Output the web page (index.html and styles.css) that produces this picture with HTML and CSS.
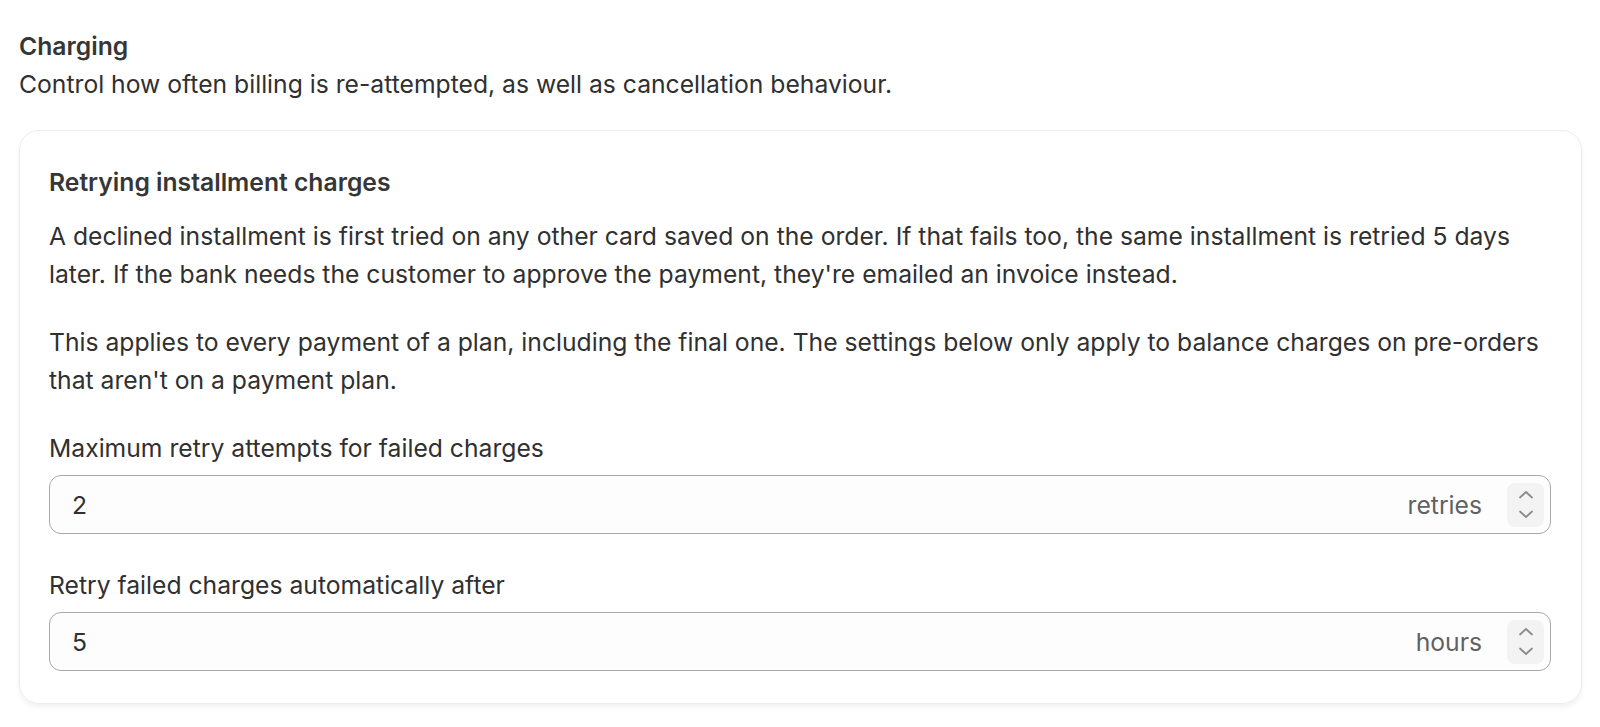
FILE: index.html
```html
<!DOCTYPE html>
<html lang="en">

<head>
    <meta charset="UTF-8">
    <meta name="viewport" content="width=device-width, initial-scale=1.0">
    <title>Charging</title>
    <link rel="stylesheet" href="styles.css">
</head>

<body>
    <div class="section">
        <div class="section-head">
            <h2>Charging</h2>
            <p>Control how often billing is re-attempted, as well as cancellation behaviour.</p>
        </div>
        <div class="card">
            <h3>Retrying installment charges</h3>
            <p class="text">A declined installment is first tried on any other card saved on the order. If that fails too, the same installment is retried 5 days later. If the bank needs the customer to approve the payment, they're emailed an invoice instead.</p>
            <p class="text">This applies to every payment of a plan, including the final one. The settings below only apply to balance charges on pre-orders that aren't on a payment plan.</p>

            <div class="field">
                <label>Maximum retry attempts for failed charges</label>
                <div class="input">
                    <span class="value">2</span>
                    <span class="unit">retries</span>
                    <span class="stepper">
                        <svg width="18" height="11" viewBox="0 0 18 11"><path d="M3 8.5 9 3l6 5.5" fill="none" stroke="#8a8a8a" stroke-width="1.7" stroke-linecap="round" stroke-linejoin="round"/></svg>
                        <svg width="18" height="11" viewBox="0 0 18 11"><path d="M3 2.5 9 8l6-5.5" fill="none" stroke="#8a8a8a" stroke-width="1.7" stroke-linecap="round" stroke-linejoin="round"/></svg>
                    </span>
                </div>
            </div>

            <div class="field">
                <label>Retry failed charges automatically after</label>
                <div class="input">
                    <span class="value">5</span>
                    <span class="unit">hours</span>
                    <span class="stepper">
                        <svg width="18" height="11" viewBox="0 0 18 11"><path d="M3 8.5 9 3l6 5.5" fill="none" stroke="#8a8a8a" stroke-width="1.7" stroke-linecap="round" stroke-linejoin="round"/></svg>
                        <svg width="18" height="11" viewBox="0 0 18 11"><path d="M3 2.5 9 8l6-5.5" fill="none" stroke="#8a8a8a" stroke-width="1.7" stroke-linecap="round" stroke-linejoin="round"/></svg>
                    </span>
                </div>
            </div>
        </div>
    </div>
</body>

</html>
```

FILE: styles.css
```css
body {
    margin: 0;
    background: #fff;
    font-family: Inter, "Noto Sans", sans-serif;
    font-size: 24.7px;
    line-height: 38px;
    color: #303030;
}

h2,
h3,
p {
    margin: 0;
}

.section {
    padding: 27px 18px 25px 19px;
}

.section-head h2 {
    font-size: 24.7px;
    font-weight: 600;
    color: #363636;
}

.section-head {
    margin-bottom: 27px;
}

.card {
    border: 1px solid #ececec;
    border-radius: 20px;
    box-shadow: 0 3px 5px rgba(0, 0, 0, 0.06);
    padding: 32px 30px 32px 29px;
}

.card h3 {
    font-size: 24.7px;
    font-weight: 600;
    color: #363636;
    margin-bottom: 16px;
}

.text {
    margin-bottom: 30px;
}

.field {
    margin-bottom: 32px;
}

.field:last-child {
    margin-bottom: 0;
}

.field label {
    display: block;
    margin-bottom: 8px;
}

.input {
    display: flex;
    align-items: center;
    height: 59px;
    box-sizing: border-box;
    border: 1.5px solid #a8a8a8;
    border-radius: 12px;
    background: #fdfdfd;
    padding: 0 6px 0 22px;
}

.value {
    flex: 1;
}

.unit {
    color: #616161;
    margin-right: 25px;
}

.stepper {
    display: flex;
    flex-direction: column;
    align-items: center;
    justify-content: center;
    gap: 9px;
    width: 37px;
    height: 44px;
    border-radius: 8px;
    background: #f3f3f3;
}

.stepper svg {
    display: block;
}
```
